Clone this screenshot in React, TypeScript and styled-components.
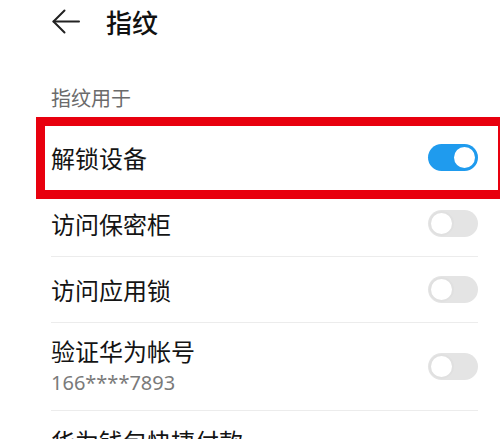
import React from "react";
import styled, { createGlobalStyle } from "styled-components";

const Global = createGlobalStyle`
  html, body { margin: 0; padding: 0; background: #ffffff; }
  body { width: 500px; height: 439px; overflow: hidden; font-family: "Noto Sans CJK SC", "Noto Sans", sans-serif; }
`;

const Page = styled.div`
  position: relative;
  width: 500px;
  height: 439px;
  overflow: hidden;
  background: #fff;
`;

const Header = styled.div`
  height: 44px;
  display: flex;
  align-items: center;
  padding-left: 52px;
  gap: 26px;
`;

const Title = styled.div`
  font-size: 26px;
  line-height: 30px;
  color: #111;
  font-weight: 500;
`;

const SectionLabel = styled.div`
  padding: 38px 0 12px 51px;
  font-size: 20px;
  line-height: 31px;
  color: #6b6b6b;
`;

const List = styled.div`
  display: flex;
  flex-direction: column;
`;

const Row = styled.div<{ $h: number; $divider?: boolean; $top?: boolean }>`
  height: ${(p) => p.$h}px;
  flex-shrink: 0;
  margin: 0 22px 0 51px;
  padding-top: ${(p) => (p.$top ? "14px" : "0")};
  display: flex;
  align-items: ${(p) => (p.$top ? "flex-start" : "center")};
  justify-content: space-between;
  box-sizing: border-box;
  border-bottom: ${(p) => (p.$divider ? "1px solid #ececec" : "none")};
`;

const TextCol = styled.div`
  display: flex;
  flex-direction: column;
`;

const RowTitle = styled.div`
  font-size: 24px;
  line-height: 32px;
  color: #141414;
`;

const RowSub = styled.div`
  font-size: 20px;
  line-height: 32px;
  color: #7a7a7a;
  font-family: "Noto Sans", "Noto Sans CJK SC", sans-serif;
`;

const Track = styled.div<{ $on: boolean }>`
  width: 50px;
  height: 27px;
  border-radius: 14px;
  background: ${(p) => (p.$on ? "#1f9bee" : "#e4e4e4")};
  display: flex;
  align-items: center;
  justify-content: ${(p) => (p.$on ? "flex-end" : "flex-start")};
  padding: 0 1px;
  box-sizing: border-box;
  flex-shrink: 0;
  align-self: center;
`;

const Knob = styled.div<{ $on: boolean }>`
  width: 25px;
  height: 25px;
  border-radius: 50%;
  background: #fff;
  box-sizing: border-box;
  border: 2px solid ${(p) => (p.$on ? "#1f9bee" : "#e0e0e0")};
`;

const Highlight = styled.div`
  position: absolute;
  left: 36px;
  top: 117px;
  width: 471px;
  height: 82px;
  border: 9px solid #e8000e;
  box-sizing: border-box;
  pointer-events: none;
`;

const Toggle = ({ on }: { on: boolean }) => (
  <Track $on={on}>
    <Knob $on={on} />
  </Track>
);

const BackArrow = () => (
  <svg width="28" height="26" viewBox="0 0 28 26" fill="none">
    <path d="M1.5 12.5 H27" stroke="#222" strokeWidth="2" strokeLinecap="round" />
    <path d="M12.5 1.5 L1.5 12.5 L12.5 23.5" stroke="#222" strokeWidth="2" strokeLinecap="round" strokeLinejoin="round" />
  </svg>
);

export default function App() {
  return (
    <Page>
      <Global />
      <Header>
        <BackArrow />
        <Title>指纹</Title>
      </Header>
      <SectionLabel>指纹用于</SectionLabel>
      <List>
        <Row $h={66} $divider>
          <RowTitle>解锁设备</RowTitle>
          <Toggle on />
        </Row>
        <Row $h={66} $divider>
          <RowTitle>访问保密柜</RowTitle>
          <Toggle on={false} />
        </Row>
        <Row $h={66} $divider>
          <RowTitle>访问应用锁</RowTitle>
          <Toggle on={false} />
        </Row>
        <Row $h={88} $divider>
          <TextCol>
            <RowTitle>验证华为帐号</RowTitle>
            <RowSub>166****7893</RowSub>
          </TextCol>
          <Toggle on={false} />
        </Row>
        <Row $h={88} $top>
          <RowTitle>华为钱包快捷付款</RowTitle>
          <Toggle on={false} />
        </Row>
      </List>
      <Highlight />
    </Page>
  );
}
